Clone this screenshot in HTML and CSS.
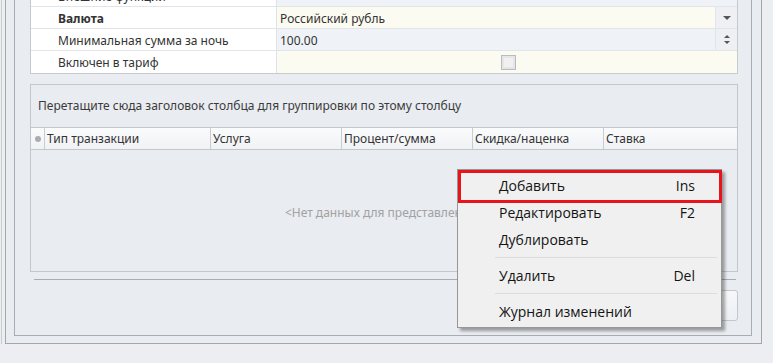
FILE: index.html
```html
<!DOCTYPE html>
<html lang="ru">

<head>
    <meta charset="UTF-8">
    <meta name="viewport" content="width=device-width, initial-scale=1.0">
    <title>Тариф</title>
    <link rel="stylesheet" href="styles.css">
</head>

<body>

    <div class="shell">
        <div class="frame">
            <div class="inner">

                <!-- свойства тарифа -->
                <div class="props">
                    <div class="prop-row">
                        <div class="prop-name">Внешние функции</div>
                        <div class="prop-value blue"></div>
                    </div>
                    <div class="prop-row">
                        <div class="prop-name bold">Валюта</div>
                        <div class="prop-value cream">
                            <span>Российский рубль</span>
                            <span class="edit-btn"><i class="tri-down"></i></span>
                        </div>
                    </div>
                    <div class="prop-row">
                        <div class="prop-name">Минимальная сумма за ночь</div>
                        <div class="prop-value blue">
                            <span>100.00</span>
                            <span class="edit-btn spin"><i class="tri-up"></i><i class="tri-down"></i></span>
                        </div>
                    </div>
                    <div class="prop-row">
                        <div class="prop-name">Включен в тариф</div>
                        <div class="prop-value cream center">
                            <span class="check"></span>
                        </div>
                    </div>
                </div>

                <!-- таблица транзакций -->
                <div class="grid">
                    <div class="group-panel">Перетащите сюда заголовок столбца для группировки по этому столбцу</div>
                    <div class="grid-head">
                        <div class="col indicator"><i class="dot"></i></div>
                        <div class="col c1">Тип транзакции</div>
                        <div class="col c2">Услуга</div>
                        <div class="col c3">Процент/сумма</div>
                        <div class="col c4">Скидка/наценка</div>
                        <div class="col c5">Ставка</div>
                    </div>
                    <div class="grid-empty">&lt;Нет данных для представления&gt;</div>
                </div>

                <div class="separator"></div>

                <div class="buttons">
                    <button class="btn">OK</button>
                </div>
            </div>
        </div>
    </div>

    <div class="menu">
        <div class="menu-item">
            <span>Добавить</span>
            <span class="key">Ins</span>
        </div>
        <div class="menu-item">
            <span>Редактировать</span>
            <span class="key">F2</span>
        </div>
        <div class="menu-item">
            <span>Дублировать</span>
        </div>
        <div class="menu-sep"></div>
        <div class="menu-item">
            <span>Удалить</span>
            <span class="key">Del</span>
        </div>
        <div class="menu-sep"></div>
        <div class="menu-item">
            <span>Журнал изменений</span>
        </div>
        <div class="mark"></div>
    </div>

</body>

</html>
```

FILE: styles.css
```css
* {
    padding: 0;
    margin: 0;
    box-sizing: border-box;
}

body {
    width: 773px;
    height: 363px;
    overflow: hidden;
    background-color: #eceef1;
    font-family: "Noto Sans", "Liberation Sans", sans-serif;
    font-size: 12px;
    color: #333;
    padding-left: 1px;
}

.shell {
    border-left: 1px solid #c9cdd2;
    padding-left: 3px;
    width: 761px;
}

.frame {
    border: 1px solid #a3a7ac;
    border-top: none;
    height: 344px;
    padding: 0 9px 7px 8px;
    background-color: #e9ecf0;
}

.inner {
    border: 1px solid #a9adb2;
    border-top: none;
    height: 100%;
    padding: 0 13px 0 15px;
    display: flex;
    flex-direction: column;
}

/* property grid */
.props {
    margin-top: -16px;
    border: 1px solid #c6cacf;
    background-color: #fff;
}

.prop-row {
    display: flex;
    height: 22px;
    border-bottom: 1px solid #e1e4e8;
}

.prop-row:last-child {
    border-bottom: none;
}

.prop-name {
    width: 246px;
    padding-left: 27px;
    padding-top: 1px;
    line-height: 21px;
    border-right: 1px solid #dfe2e6;
    white-space: nowrap;
}

.bold {
    font-weight: bold;
}

.prop-value {
    flex: 1;
    display: flex;
    align-items: center;
    justify-content: space-between;
    padding-left: 3px;
    padding-top: 1px;
}

.prop-value.center {
    justify-content: center;
}

.blue {
    background-color: #eff2f7;
}

.cream {
    background-color: #fcfbf1;
}

.edit-btn {
    width: 22px;
    height: 21px;
    margin-top: -1px;
    background-color: #eef0f3;
    border-left: 1px solid #e2e5e9;
    display: flex;
    flex-direction: column;
    align-items: center;
    justify-content: center;
    gap: 3px;
}

.tri-down,
.tri-up {
    width: 0;
    height: 0;
    border-left: 4px solid transparent;
    border-right: 4px solid transparent;
}

.tri-down {
    border-top: 4px solid #555;
}

.tri-up {
    border-bottom: 4px solid #555;
}

.spin .tri-down,
.spin .tri-up {
    border-left-width: 3px;
    border-right-width: 3px;
    border-top-width: 3px;
    border-bottom-width: 3px;
}

.spin .tri-up {
    border-top: none;
}

.spin .tri-down {
    border-bottom: none;
}

.check {
    width: 15px;
    height: 15px;
    border: 1px solid #b8bbbf;
    background-color: #f1f1f1;
    box-shadow: inset 0 0 0 2px #e6e6e6;
}

/* transactions grid */
.grid {
    margin-top: 10px;
    height: 188px;
    border: 1px solid #c3c7cc;
    display: flex;
    flex-direction: column;
    background-color: #e9ecf0;
}

.group-panel {
    height: 42px;
    padding: 12px 0 0 7px;
    white-space: nowrap;
    color: #3b3b3b;
}

.grid-head {
    display: flex;
    height: 23px;
    border-top: 1px solid #c3c7cc;
    border-bottom: 1px solid #c3c7cc;
    background: linear-gradient(#fafbfc, #f0f2f5);
}

.col {
    line-height: 21px;
    padding-left: 2px;
    border-right: 1px solid #c9cdd2;
    white-space: nowrap;
}

.indicator {
    width: 14px;
    padding: 0;
    display: flex;
    align-items: center;
    justify-content: center;
}

.dot {
    width: 6px;
    height: 6px;
    border-radius: 50%;
    background-color: #a9adb2;
}

.c1 {
    width: 166px;
}

.c2,
.c3 {
    width: 131px;
}

.c4 {
    width: 131px;
}

.c5 {
    flex: 1;
    border-right: none;
}

.grid-empty {
    flex: 1;
    display: flex;
    align-items: center;
    justify-content: center;
    color: #a2a2a2;
    padding-top: 4px;
}

.separator {
    margin: 7px 2px 0 4px;
    border-top: 1px solid #a9adb2;
}

.buttons {
    display: flex;
    justify-content: flex-end;
    padding: 10px 0 0 0;
}

.btn {
    width: 75px;
    height: 31px;
    border: 1px solid #c3c7cc;
    border-radius: 3px;
    background: linear-gradient(#f7f8fa, #eceff3);
    font-family: inherit;
    font-size: 12px;
    color: #333;
}

/* context menu */
.menu {
    position: absolute;
    left: 457px;
    top: 169px;
    width: 265px;
    height: 159px;
    padding-top: 2px;
    background-color: #f0f0f0;
    border: 1px solid #979797;
    box-shadow: 3px 3px 3px rgba(0, 0, 0, 0.35);
    font-family: "Open Sans", "Noto Sans", sans-serif;
    font-size: 14px;
    color: #141414;
}

.menu-item {
    height: 27px;
    display: flex;
    align-items: center;
    justify-content: space-between;
    padding: 0 26px 0 41px;
}

.menu-sep {
    height: 9px;
    margin: 0 4px 0 37px;
    border-top: 4px solid transparent;
    border-bottom: 4px solid transparent;
    background-color: #dcdcdc;
    background-clip: content-box;
}

.mark {
    position: absolute;
    left: 0;
    top: 0;
    width: 264px;
    height: 33px;
    border: 3px solid #e8131b;
}
```
